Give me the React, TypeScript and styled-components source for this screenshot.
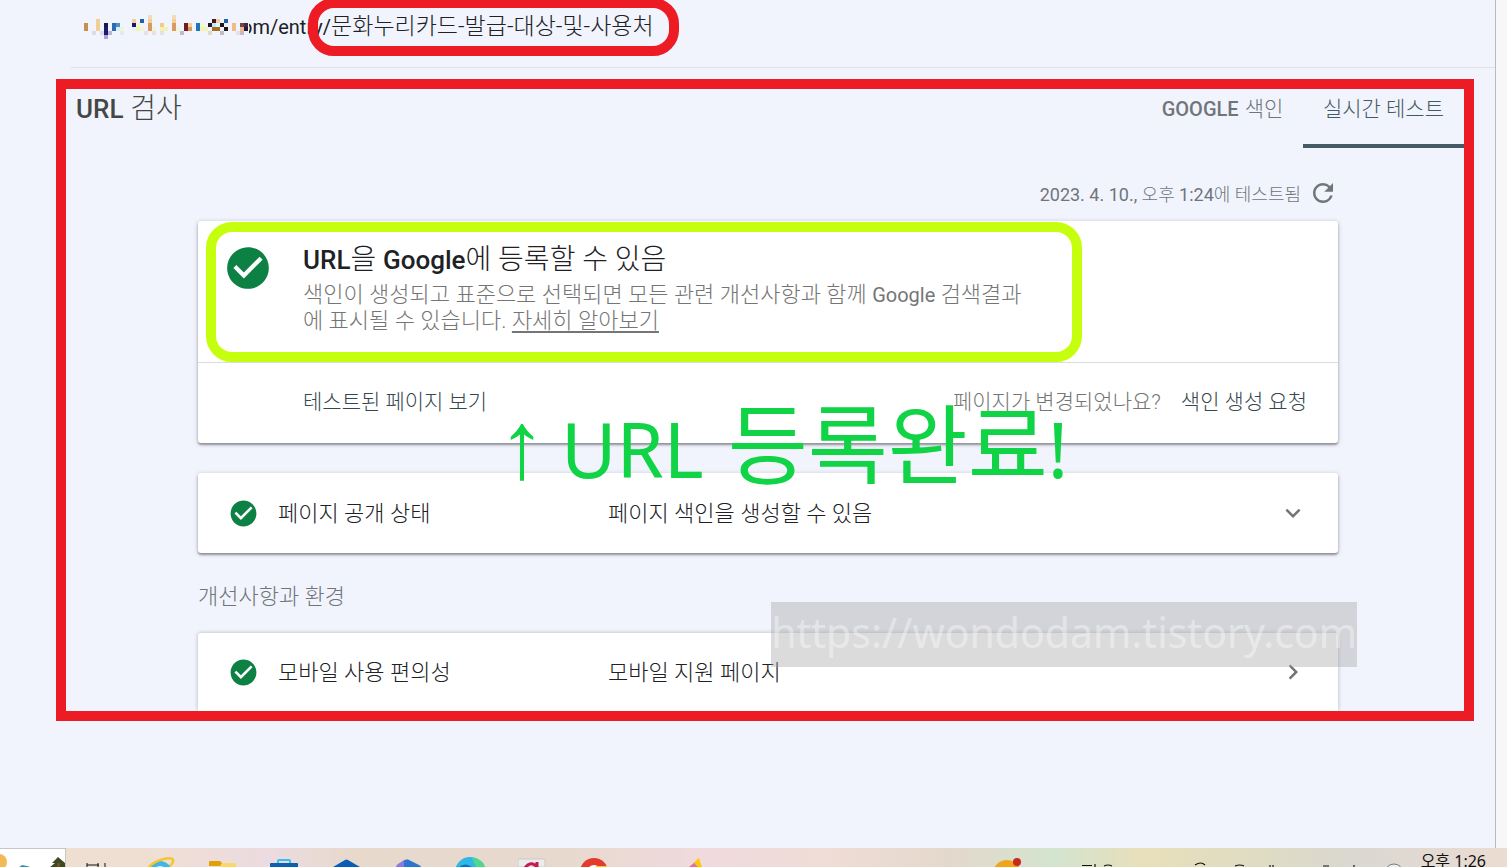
import React from 'react';
import styled, { createGlobalStyle } from 'styled-components';
import { MdCheckCircle, MdChevronRight, MdExpandMore, MdRefresh } from 'react-icons/md';

const GlobalStyle = createGlobalStyle`
  *, *::before, *::after { box-sizing: border-box; }
  body {
    margin: 0;
    background: #f1f4fd;
    color: #202124;
    font-family: Roboto, "Noto Sans CJK KR", sans-serif;
    font-size: 20px;
    font-weight: 300;
  }
  button { font: inherit; border: 0; background: none; padding: 0; cursor: pointer; }
  h1, h2, h3, p { margin: 0; }
`;

const Shell = styled.div`
  display: flex;
  flex-direction: column;
  min-height: 100vh;
  overflow: hidden;
`;

const Body = styled.div`
  flex: 1;
  display: flex;
`;

const Content = styled.div`
  flex: 1;
  display: flex;
  flex-direction: column;
  border-right: 1px solid #b9bbc0;
`;

const ScrollTrack = styled.div`
  width: 11px;
  background: #f7f7f7;
`;

const AddressBar = styled.header`
  display: flex;
  align-items: center;
  height: 68px;
  margin-left: 71px;
  padding: 0 0 14px 13px;
  border-bottom: 1px solid #dfe1e5;
  line-height: 28px;
  white-space: nowrap;
  > svg { position: relative; z-index: 1; margin-right: -8px; }
`;

const UrlText = styled.span`
  font-weight: 400;
`;

const Slug = styled.span`
  position: relative;
  display: inline-block;
  font-size: 23px;
  font-weight: 300;
  color: #202124;
`;

const SlugMark = styled.span`
  position: absolute;
  top: -15px;
  left: -23px;
  right: -25px;
  height: 58px;
  border: 10px solid #ed1c24;
  border-radius: 26px;
`;

const Frame = styled.main`
  position: relative;
  margin: 11px 21px 0 56px;
  border: 10px solid #ed1c24;
`;

const TitleBar = styled.div`
  display: flex;
  justify-content: space-between;
  height: 59px;
  padding-left: 10px;
`;

const Latin = styled.span`
  font-weight: 500;
`;

const Title = styled.h1`
  font-size: 28px;
  font-weight: 300;
  line-height: 40px;
  color: #444746;
  ${Latin} { font-size: 26px; }
`;

const Tabs = styled.nav`
  display: flex;
`;

const Tab = styled.button<{ $active?: boolean }>`
  display: flex;
  align-items: flex-start;
  justify-content: center;
  gap: 6px;
  width: 161px;
  font-size: 21px;
  line-height: 41px;
  font-weight: 300;
  color: ${p => (p.$active ? '#455a64' : '#70757a')};
  border-bottom: 4px solid ${p => (p.$active ? '#455a64' : 'transparent')};
  ${Latin} { font-size: 20px; }
`;

const Results = styled.div`
  padding: 0 126px 0 132px;
`;

const Tested = styled.div`
  display: flex;
  align-items: center;
  justify-content: flex-end;
  gap: 7px;
  height: 73px;
  padding: 16px 0 0;
  color: #70757a;
  font-size: 18px;
  b { font-weight: 400; }
`;

const IconButton = styled.button`
  display: flex;
  color: #70757a;
`;

const Card = styled.section<{ $cut?: boolean }>`
  position: relative;
  background: #fff;
  border-radius: ${p => (p.$cut ? '3px 3px 0 0' : '3px')};
  box-shadow: ${p => (p.$cut
    ? '0 0 4px rgba(0, 0, 0, 0.25)'
    : '0 2px 2px rgba(0, 0, 0, 0.3), 0 1px 5px rgba(0, 0, 0, 0.22)')};
  clip-path: ${p => (p.$cut ? 'inset(-6px -6px 0 -6px)' : 'none')};
  & + & { margin-top: 30px; }
`;

const Verdict = styled.div`
  display: flex;
  height: 142px;
  padding: 22px 25px 0;
  gap: 30px;
  border-bottom: 1px solid #dadce0;
  > svg { flex: none; color: #0d8043; }
`;

const VerdictMark = styled.div`
  position: absolute;
  top: 1px;
  left: 8px;
  width: 876px;
  height: 140px;
  border: 10px solid #c6ff0d;
  border-radius: 26px;
`;

const VerdictTitle = styled.h2`
  font-size: 28px;
  line-height: 34px;
  font-weight: 300;
  ${Latin} { font-size: 26px; }
`;

const VerdictText = styled.p`
  margin-top: 5px;
  font-size: 22px;
  line-height: 25px;
  color: #757575;
  b { font-size: 20px; font-weight: 400; }
  a { color: inherit; text-underline-offset: 3px; text-decoration-thickness: 2px; }
`;

const Actions = styled.div`
  display: flex;
  align-items: center;
  gap: 20px;
  height: 80px;
  padding: 0 31px 6px 105px;
  font-size: 21px;
  color: #757575;
`;

const TextButton = styled.button`
  color: #37474f;
`;

const Spacer = styled.span`
  flex: 1;
`;

const Row = styled.button<{ $cut?: boolean }>`
  display: flex;
  align-items: center;
  width: 100%;
  height: ${p => (p.$cut ? 78 : 80)}px;
  padding: 0 30px;
  text-align: left;
  font-size: 22px;
  color: #202124;
  > svg:first-child { color: #0d8043; margin-right: 19px; }
  > svg:last-child { margin-left: auto; color: #70757a; }
`;

const RowText = styled.span<{ $label?: boolean }>`
  width: ${p => (p.$label ? '330px' : 'auto')};
  padding-bottom: 4px;
`;

const GroupTitle = styled.h3`
  padding: 28px 0 20px;
  font-size: 22px;
  line-height: 32px;
  font-weight: 300;
  color: #70757a;
`;

const Stamp = styled.div`
  position: absolute;
  top: 304px;
  left: 432px;
  line-height: 104px;
  white-space: nowrap;
  color: #10d345;
  font-family: "Liberation Sans", "Noto Sans CJK KR", sans-serif;
  font-size: 87px;
  font-weight: 400;
  display: flex;
  align-items: baseline;
`;

const StampArrow = styled.span`
  font-size: 96px;
  margin-right: 15px;
`;

const StampLatin = styled.span<{ $gap?: number }>`
  font-family: "Noto Sans", "Liberation Sans", sans-serif;
  font-size: 76px;
  margin-right: ${p => p.$gap || 0}px;
`;

const Watermark = styled.div`
  position: absolute;
  top: 513px;
  right: 107px;
  height: 65px;
  line-height: 60px;
  background: rgba(164, 164, 164, 0.4);
  color: rgba(255, 255, 255, 0.4);
  font-family: "Noto Sans", sans-serif;
  font-size: 41px;
  font-weight: 400;
  white-space: nowrap;
`;

const Taskbar = styled.footer`
  display: flex;
  height: 19px;
  overflow: hidden;
  background: linear-gradient(90deg, #efdfd0 0%, #efdfd3 10%, #ecdbe0 18%, #e8d9cd 23%, #e8d9cf 38%, #f0dade 47%, #efddd6 55%, #e4d8cc 63%, #d3e4cf 70%, #e8dfba 76%, #dfdcc4 84%, #dad8d1 90%, #ecdcd2 100%);
`;

const Widgets = styled.div`
  width: 66px;
  background: #fff;
  border-top: 1px solid #c6c6c6;
  border-right: 1px solid #c6c6c6;
`;

const Apps = styled.div`
  display: flex;
  margin-left: 2px;
`;

const AppButton = styled.button`
  width: 62px;
  height: 19px;
  display: flex;
  justify-content: center;
`;

const Tray = styled.div`
  display: flex;
  margin-left: auto;
  margin-right: 21px;
`;

const Clock = styled.time`
  font-size: 16px;
  line-height: 26px;
  font-family: "Noto Sans", "Noto Sans CJK KR", sans-serif;
  font-weight: 400;
  color: #111;
  white-space: nowrap;
`;

/* column, row, height in cells, colour */
const cells: [number, number, number, string][] = [
  [0, 2, 2, '#c8904e'], [2, 4, 1, '#dcdce8'], [3, 1, 3, '#f3cf98'], [4, 4, 1, '#dcdcec'],
  [5, 2, 1, '#1c1c40'], [5, 3, 2, '#1b1b7c'], [5, 5, 1, '#a9a5cc'], [6, 4, 1, '#b8b5d5'],
  [7, 2, 2, '#2b6cb0'], [8, 2, 1, '#4a90d0'], [8, 3, 1, '#dcebfa'], [9, 4, 1, '#dcebfa'], [9, 3, 1, '#f1f6d0'],
  [12, 1, 1, '#f3cf98'], [12, 2, 1, '#1a1a6c'], [12, 3, 1, '#e0f3ff'], [13, 2, 1, '#f1f6d0'],
  [13, 3, 1, '#f2f3b2'], [14, 1, 1, '#1f62a8'], [14, 3, 1, '#f1f6d0'], [15, 4, 1, '#eadfe0'],
  [16, 0, 1, '#f3dcbc'], [16, 1, 1, '#f3cf98'], [16, 2, 2, '#d89a60'], [17, 3, 1, '#f1f6d0'], [17, 4, 1, '#eadfe0'],
  [19, 2, 1, '#f3c98c'], [19, 3, 1, '#f2f3b2'], [19, 4, 1, '#eadfe0'], [20, 3, 1, '#f2f3b2'],
  [22, 0, 1, '#f3dcbc'], [22, 1, 1, '#f3cf98'], [22, 2, 2, '#d89a60'], [23, 3, 1, '#f1f6d0'],
  [24, 4, 1, '#c9b9c0'], [25, 2, 2, '#701c22'], [26, 2, 1, '#f3cf98'], [26, 3, 1, '#d89a60'],
  [28, 2, 2, '#1c77b8'], [29, 3, 1, '#f2f3b2'], [29, 2, 1, '#f1f6d0'], [30, 3, 1, '#f2f3b2'],
  [31, 2, 1, '#1c1c20'], [31, 4, 1, '#dcdccc'], [32, 1, 1, '#4a161c'], [32, 2, 1, '#bfe6fa'], [32, 3, 1, '#a86f1c'],
  [33, 1, 1, '#f3cf98'], [33, 2, 1, '#e0f3ff'], [33, 3, 1, '#a86f1c'], [34, 2, 1, '#1c1c20'], [34, 4, 1, '#c9b9c0'],
  [35, 1, 1, '#1f62a8'], [35, 3, 1, '#1c1c20'], [37, 2, 2, '#f3b98a'], [38, 4, 1, '#eadfe0'],
  [39, 2, 1, '#6c4450'], [39, 3, 1, '#f3b98a'], [40, 2, 1, '#4a2a34'], [40, 3, 1, '#1c1c40'], [39, 4, 1, '#c9b9c0'],
];

const Mosaic = () => (
  <svg width="165" height="24" viewBox="0 0 165 24" aria-hidden="true" shapeRendering="crispEdges">
    <rect x="150" y="0" width="15" height="24" fill="#f1f4fd" />
    {cells.map(([c, r, h, fill], i) => (
      <rect key={i} x={c * 4} y={r * 4} width={4} height={h * 4} fill={fill} />
    ))}
  </svg>
);

const Icon = ({ children, width = 30 }: { children: React.ReactNode; width?: number }) => (
  <svg width={width} height={19} viewBox={`0 0 ${width} 19`} aria-hidden="true">{children}</svg>
);

const WeatherArt = () => (
  <svg width="65" height="18" viewBox="0 0 65 18" aria-hidden="true">
    <circle cx="-1" cy="12" r="8" fill="#f3b857" />
    <path d="M18 18l4-3 5 1 6 2z" fill="#2f93ad" />
    <path d="M58 7l-6 6h3l-6 5h16v-5z" fill="#3c4a20" />
    <path d="M57 13h3v5h-3z" fill="#7a4f1c" />
  </svg>
);

export default function App() {
  return (
    <>
      <GlobalStyle />
      <Shell>
        <Body>
          <Content>
            <AddressBar>
              <Mosaic />
              <UrlText>om/entry/</UrlText>
              <Slug>
                문화누리카드-발급-대상-및-사용처
                <SlugMark />
              </Slug>
            </AddressBar>
            <Frame>
              <TitleBar>
                <Title><Latin>URL</Latin> 검사</Title>
                <Tabs>
                  <Tab><Latin>GOOGLE</Latin> 색인</Tab>
                  <Tab $active>실시간 테스트</Tab>
                </Tabs>
              </TitleBar>
              <Results>
                <Tested>
                  <span><b>2023. 4. 10.,</b> 오후 <b>1:24</b>에 테스트됨</span>
                  <IconButton aria-label="새로고침"><MdRefresh size={30} /></IconButton>
                </Tested>
                <Card>
                  <Verdict>
                    <MdCheckCircle size={50} />
                    <div>
                      <VerdictTitle><Latin>URL</Latin>을 <Latin>Google</Latin>에 등록할 수 있음</VerdictTitle>
                      <VerdictText>
                        색인이 생성되고 표준으로 선택되면 모든 관련 개선사항과 함께 <b>Google</b> 검색결과<br />
                        에 표시될 수 있습니다. <a href="#learn">자세히 알아보기</a>
                      </VerdictText>
                    </div>
                  </Verdict>
                  <Actions>
                    <TextButton>테스트된 페이지 보기</TextButton>
                    <Spacer />
                    <span>페이지가 변경되었나요?</span>
                    <TextButton>색인 생성 요청</TextButton>
                  </Actions>
                  <VerdictMark />
                </Card>
                <Card>
                  <Row>
                    <MdCheckCircle size={31} />
                    <RowText $label>페이지 공개 상태</RowText>
                    <RowText>페이지 색인을 생성할 수 있음</RowText>
                    <MdExpandMore size={30} />
                  </Row>
                </Card>
                <GroupTitle>개선사항과 환경</GroupTitle>
                <Card $cut>
                  <Row $cut>
                    <MdCheckCircle size={31} />
                    <RowText $label>모바일 사용 편의성</RowText>
                    <RowText>모바일 지원 페이지</RowText>
                    <MdChevronRight size={30} />
                  </Row>
                </Card>
              </Results>
              <Stamp>
                <StampArrow>↑</StampArrow>
                <StampLatin $gap={24}>URL</StampLatin>
                <span>등록완료</span>
                <StampLatin>!</StampLatin>
              </Stamp>
              <Watermark>https://wondodam.tistory.com</Watermark>
            </Frame>
          </Content>
          <ScrollTrack />
        </Body>
        <Taskbar>
          <Widgets><WeatherArt /></Widgets>
          <Apps>
            <AppButton aria-label="작업 보기">
              <Icon><path d="M3 15v4M3 17h12M14 15v4M21 15v4" stroke="#111" strokeWidth="1" fill="none" /></Icon>
            </AppButton>
            <AppButton aria-label="Internet Explorer">
              <Icon>
                <circle cx="14" cy="25" r="12" fill="#43b7e2" />
                <circle cx="14" cy="25" r="7" fill="#d8eef5" />
                <path d="M3 19C9 12 25 8 27 12c1 2-1 4-3 6" stroke="#f5c62c" strokeWidth="2.5" fill="none" />
              </Icon>
            </AppButton>
            <AppButton aria-label="파일 탐색기">
              <Icon>
                <path d="M14 15h12a2 2 0 0 1 2 2v2H12z" fill="#fbd768" />
                <path d="M1 14a1 1 0 0 1 1-1h10l2 2-2 3H1z" fill="#e0a008" />
              </Icon>
            </AppButton>
            <AppButton aria-label="Microsoft Store">
              <Icon>
                <path d="M8 16v-3a1 1 0 0 1 1-1h10a1 1 0 0 1 1 1v3" stroke="#2cc3f2" strokeWidth="2" fill="none" />
                <path d="M0 16a1 1 0 0 1 1-1h26a1 1 0 0 1 1 1v3H0z" fill="#0f5fae" />
              </Icon>
            </AppButton>
            <AppButton aria-label="메일">
              <Icon><path d="M1 19l12-7q1-1 3 0l12 7z" fill="#0a5db5" /></Icon>
            </AppButton>
            <AppButton aria-label="Microsoft 365">
              <Icon>
                <path d="M2 19q0-2 2-3l6-4q3-1 5 0v7z" fill="#8c7bdc" />
                <path d="M10 19v-6q3-3 7 0l8 4q2 1 2 2z" fill="#2b76cc" />
              </Icon>
            </AppButton>
            <AppButton aria-label="Edge">
              <Icon>
                <circle cx="14" cy="24" r="15" fill="#2fb7e8" />
                <path d="M16 10c7 0 12 4 13 9h-9z" fill="#4fd88a" />
                <path d="M3 19q6-5 13 0z" fill="#0f6fbf" />
              </Icon>
            </AppButton>
            <AppButton aria-label="캡처">
              <Icon>
                <path d="M0 11h27v8H0z" fill="#ececec" stroke="#c9c9c9" />
                <path d="M7 20q6-8 12-1M19 14v5" stroke="#c81a48" strokeWidth="3" fill="none" />
              </Icon>
            </AppButton>
            <AppButton aria-label="Chrome">
              <Icon>
                <circle cx="14" cy="24" r="14" fill="#e33b2e" />
                <circle cx="14" cy="24" r="7" fill="#fff" />
                <path d="M16 18h11v1H16z" fill="#f9c72c" />
              </Icon>
            </AppButton>
            <AppButton aria-label="빈 앱" />
            <AppButton aria-label="그림판">
              <Icon width={62}>
                <path d="M1 19l6-5 4 5z" fill="#e0709c" />
                <path d="M6 15q4-5 5-5 1 4 3 9h-4z" fill="#fbc90a" />
              </Icon>
            </AppButton>
          </Apps>
          <Tray>
            <Icon width={430}>
              <circle cx="16" cy="26" r="14" fill="#f0a51c" />
              <circle cx="26" cy="14" r="4" fill="#c92a1c" />
              <g stroke="#111" strokeWidth="1.2" fill="none">
                <path d="M91 17.500h10M104 16v3M113 18q4-2 8 0M204 17q6-4 10 0M244 18q5-2 9 0M279 17v2M282 17v2M332 18h6M363 17v2" />
              </g>
              <circle cx="403" cy="25" r="9" fill="#eee" stroke="#777" />
            </Icon>
            <Clock>오후 1:26</Clock>
          </Tray>
        </Taskbar>
      </Shell>
    </>
  );
}
